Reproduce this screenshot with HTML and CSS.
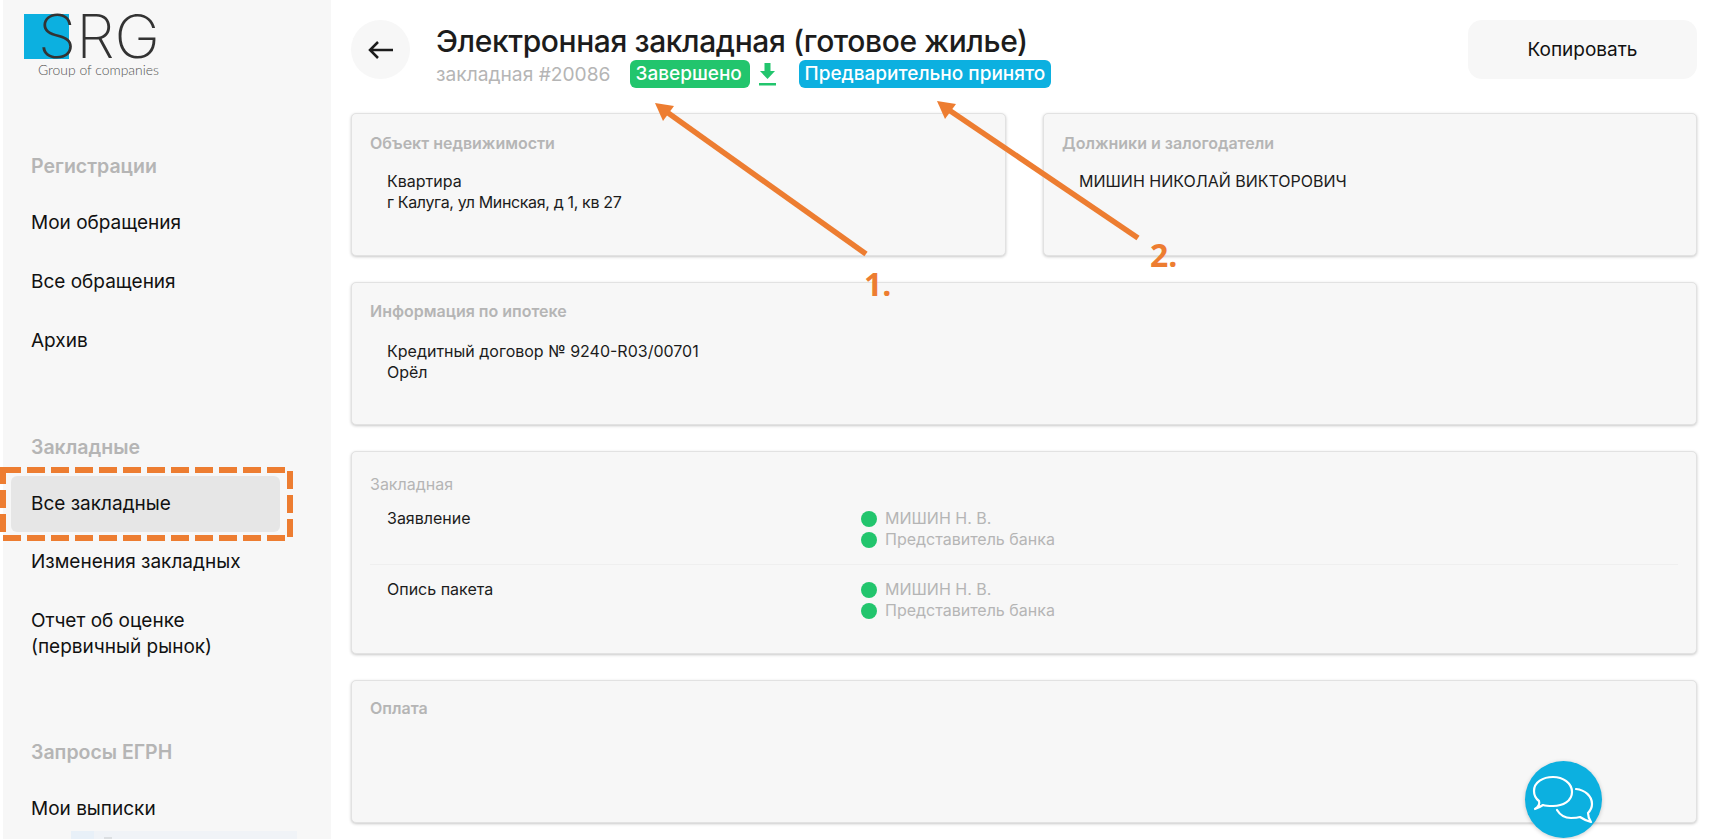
FILE: index.html
```html
<!DOCTYPE html>
<html lang="ru">
<head>
<meta charset="utf-8">
<title>Электронная закладная</title>
<link rel="stylesheet" href="styles.css">
</head>
<body>
<div class="app">
  <aside class="sidebar">
    <svg class="logo" width="160" height="80" viewBox="0 0 160 80">
      <rect x="0" y="14" width="45" height="45" fill="#0cb0e0"/>
      <text class="logo-main" x="14" y="58" textLength="122" lengthAdjust="spacingAndGlyphs">SRG</text>
      <text class="logo-sub" x="14" y="75" textLength="121" lengthAdjust="spacingAndGlyphs">Group of companies</text>
    </svg>
    <nav class="nav">
      <div class="nav-title">Регистрации</div>
      <a class="nav-item">Мои обращения</a>
      <a class="nav-item">Все обращения</a>
      <a class="nav-item">Архив</a>
      <div class="nav-title nav-title-gap">Закладные</div>
      <a class="nav-item nav-item-active">Все закладные</a>
      <a class="nav-item">Изменения закладных</a>
      <a class="nav-item nav-item-tall">Отчет об оценке<br>(первичный рынок)</a>
      <div class="nav-title nav-title-gap">Запросы ЕГРН</div>
      <a class="nav-item">Мои выписки</a>
    </nav>
    <div class="sidebar-peek"></div>
  </aside>
  <main class="main">
    <header class="header">
      <button class="back" type="button" aria-label="Назад">
        <svg width="26" height="20" viewBox="0 0 26 20" fill="none" stroke="#1c1c1c" stroke-width="2.5"><path d="M25 10H2M10 2L2 10l8 8"/></svg>
      </button>
      <div class="heading">
        <h1 class="title">Электронная закладная (готовое жилье)</h1>
        <div class="sub">
          <span class="sub-id">закладная #20086</span>
          <span class="badge badge-green">Завершено</span>
          <svg class="dl" width="17" height="23" viewBox="0 0 17 23" fill="#22c56d"><path d="M5.5 0h6v8H16l-7.5 8L1 8h4.500z"/><rect x="0" y="20" width="17" height="2.500"/></svg>
          <span class="badge badge-blue">Предварительно принято</span>
        </div>
      </div>
      <button class="copy" type="button">Копировать</button>
    </header>
    <div class="two">
      <section class="card card-sm">
        <h2 class="card-title">Объект недвижимости</h2>
        <div class="card-body">Квартира<br><span class="tight">г Калуга, ул Минская, д 1, кв 27</span></div>
      </section>
      <section class="card card-sm">
        <h2 class="card-title">Должники и залогодатели</h2>
        <div class="card-body">МИШИН НИКОЛАЙ ВИКТОРОВИЧ</div>
      </section>
    </div>
    <section class="card card-sm card-info">
      <h2 class="card-title">Информация по ипотеке</h2>
      <div class="card-body">Кредитный договор № 9240-R03/00701<br>Орёл</div>
    </section>
    <section class="card card-doc">
      <h2 class="card-title card-title-light">Закладная</h2>
      <div class="doc-row">
        <div class="doc-name">Заявление</div>
        <ul class="signers">
          <li class="signer">МИШИН Н. В.</li>
          <li class="signer">Представитель банка</li>
        </ul>
      </div>
      <div class="doc-row doc-row-next">
        <div class="doc-name">Опись пакета</div>
        <ul class="signers">
          <li class="signer">МИШИН Н. В.</li>
          <li class="signer">Представитель банка</li>
        </ul>
      </div>
    </section>
    <section class="card card-sm card-pay">
      <h2 class="card-title">Оплата</h2>
    </section>
  </main>
</div>
<button class="chat" type="button" aria-label="Чат">
  <svg width="77" height="77" viewBox="0 0 77 77" fill="none" stroke="#fff" stroke-width="2.2" stroke-linejoin="round" stroke-linecap="round">
    <path d="M10 48C13 46 15 43 14 40C10 37 9 33 9 30C9 21 18 16 28 16C38 16 47 22 47 31C47 40 38 45 28 45C24 45 21 45 18 44C15 46 13 47 10 48Z"/>
    <path d="M51 28C60 29 67 35 67 43C67 47 65 50 63 52C63 55 64 58 66 61C62 60 58 58 55 56C52 57 49 57 46 57C40 57 35 54 32 49"/>
  </svg>
</button>
<svg class="marks" width="1714" height="839" viewBox="0 0 1714 839">
  <g stroke="#ed7d31" stroke-width="5.5" fill="none">
    <path d="M866 254L664 110"/>
    <path d="M1138 238L946 108"/>
  </g>
  <g fill="#ed7d31">
    <path d="M655 103L674 106L663 121Z"/>
    <path d="M937 101L956 104L945 119Z"/>
  </g>
  <rect class="dash" x="3" y="470" width="287" height="68"/>
  <text class="mark-num" x="864" y="296">1.</text>
  <text class="mark-num" x="1150" y="267">2.</text>
</svg>
</body>
</html>
```
FILE: styles.css
```css
* { box-sizing: border-box; }
html, body { margin: 0; padding: 0; height: 839px; overflow: hidden; background: #fff; }
body { font-family: Inter, "Noto Sans", sans-serif; color: #1c1c1c; position: relative; }
.app { display: flex; height: 839px; padding-left: 3px; }
.sidebar { width: 328px; flex: none; background: #f7f7f7; position: relative; padding: 0 0 0 21px; overflow: hidden; }
.logo { display: block; }
.logo-main { font-family: Inter, sans-serif; font-weight: 200; font-size: 60px; fill: #333; }
.logo-sub { font-family: Lato, sans-serif; font-weight: 300; font-size: 14px; fill: #555; }
.nav { margin: 0 0 0 -13px; display: flex; flex-direction: column; width: 269px; padding-top: 75px; }
.nav-title { font-size: 19.5px; font-weight: 600; color: #b5b5b5; line-height: 22px; padding-left: 20px; margin-bottom: 18px; }
.nav-title-gap { margin-top: 64px; }
.nav-item { display: block; font-size: 19px; line-height: 26px; color: #111; padding: 15px 20px; height: 56px; margin-bottom: 3px; border-radius: 6px; }
.nav-item-tall { height: 80px; margin-bottom: 4px; }
.nav-item-active { background: #e6e6e6; margin-bottom: 2px; }
.sidebar-peek { position: absolute; left: 68px; bottom: 0; width: 226px; height: 8px; background: #f0f3f7; }
.sidebar-peek::before { content: ""; position: absolute; left: 0; top: 0; width: 23px; height: 8px; background: #e8f0f8; }
.sidebar-peek::after { content: ""; position: absolute; left: 33px; top: 6px; width: 8px; height: 2px; background: #dcdfe2; }
.main { flex: 1; padding: 20px 17px 0 20px; display: flex; flex-direction: column; gap: 26px; min-width: 0; }
.header { display: flex; align-items: flex-start; height: 67px; }
.back { width: 59px; height: 59px; border-radius: 50%; border: 0; background: #f7f7f7; padding: 0; display: flex; align-items: center; justify-content: center; flex: none; }
.heading { margin-left: 26px; flex: 1; margin-top: -1px; }
.title { margin: 0; font-size: 30px; line-height: 44px; font-weight: 500; letter-spacing: -0.4px; color: #1c1c1c; }
.sub { display: flex; align-items: center; margin-top: -3px; height: 28px; }
.sub-id { font-size: 19.2px; color: #b5b5b5; width: 193.500px; }
.badge { height: 28px; line-height: 28px; border-radius: 6px; color: #fff; font-size: 19px; font-weight: 500; padding: 0 6px; }
.badge-green { background: #22c56d; width: 120px; }
.badge-blue { background: #0cb0e0; }
.dl { margin: 0 22.500px 0 9.500px; }
.copy { width: 229px; height: 59px; border: 0; border-radius: 14px; background: #f7f7f7; font: 19px Inter, sans-serif; color: #111; flex: none; }
.two { display: grid; grid-template-columns: 655px 654px; gap: 37px; }
.card { background: #f7f7f7; border: 1px solid #e2e2e2; border-radius: 5px; box-shadow: 0 1px 3px rgba(0,0,0,.22); padding: 18px 18px 0; }
.card-sm { height: 143px; }
.card-info { padding-top: 17px; }
.card-pay { padding-top: 16px; }
.card-doc { height: 203px; padding-top: 21px; }
.card-title { margin: 0; font-size: 16px; line-height: 22px; font-weight: 600; color: #b5b5b5; }
.card-title-light { font-weight: 400; }
.card-body { margin: 17px 0 0 17px; font-size: 16px; line-height: 21px; color: #1c1c1c; }
.card-info .card-body { margin-top: 19px; }
.tight { letter-spacing: -0.35px; }
.doc-row { display: flex; padding: 13px 0 0 17px; height: 69px; }
.doc-row-next { border-top: 1px solid #efefef; padding-top: 14px; height: 78px; }
.doc-name { width: 474px; font-size: 16px; line-height: 21px; flex: none; }
.signers { list-style: none; margin: 0; padding: 0; }
.signer { display: flex; align-items: center; gap: 8px; font-size: 16px; line-height: 21px; color: #b5b5b5; }
.signer::before { content: ""; width: 16px; height: 16px; border-radius: 50%; background: #22c56d; flex: none; }
.chat { position: absolute; left: 1525px; top: 761px; width: 77px; height: 77px; border-radius: 50%; border: 0; padding: 0; background: #0cb0e0; box-shadow: 0 1px 4px rgba(0,0,0,.2); }
.chat svg { display: block; }
.marks { position: absolute; left: 0; top: 0; pointer-events: none; }
.dash { fill: none; stroke: #ed7d31; stroke-width: 6; stroke-dasharray: 18 6; }
.mark-num { font-family: "Open Sans", sans-serif; font-weight: 700; font-size: 32px; fill: #ed7d31; }
```
